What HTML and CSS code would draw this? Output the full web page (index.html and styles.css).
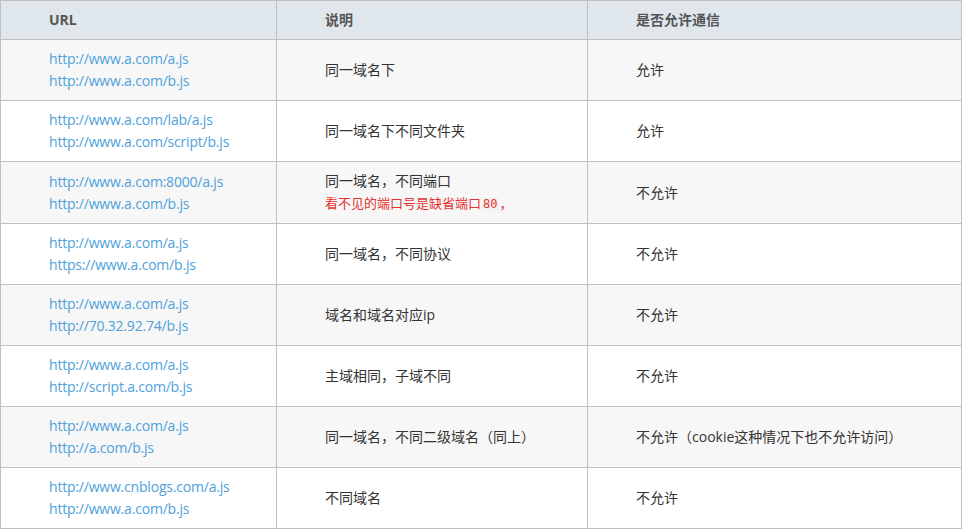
FILE: index.html
```html
<!DOCTYPE html>
<html lang="zh-CN">
<head>
<meta charset="utf-8">
<title>跨域通信</title>
<link rel="stylesheet" href="styles.css">
</head>
<body>
<table class="grid">
  <colgroup>
    <col class="c1"><col class="c2"><col class="c3">
  </colgroup>
  <thead>
    <tr><th>URL</th><th>说明</th><th>是否允许通信</th></tr>
  </thead>
  <tbody>
    <tr class="odd">
      <td><a class="lk">http://www.a.com/a.js</a><br><a class="lk">http://www.a.com/b.js</a></td>
      <td>同一域名下</td>
      <td>允许</td>
    </tr>
    <tr>
      <td><a class="lk">http://www.a.com/lab/a.js</a><br><a class="lk">http://www.a.com/script/b.js</a></td>
      <td>同一域名下不同文件夹</td>
      <td>允许</td>
    </tr>
    <tr class="odd">
      <td><a class="lk">http://www.a.com:8000/a.js</a><br><a class="lk">http://www.a.com/b.js</a></td>
      <td><div class="line">同一域名，不同端口</div><div class="note">看不见的端口号是缺省端口<code class="code">80</code>，</div></td>
      <td>不允许</td>
    </tr>
    <tr>
      <td><a class="lk">http://www.a.com/a.js</a><br><a class="lk">https://www.a.com/b.js</a></td>
      <td>同一域名，不同协议</td>
      <td>不允许</td>
    </tr>
    <tr class="odd">
      <td><a class="lk">http://www.a.com/a.js</a><br><a class="lk">http://70.32.92.74/b.js</a></td>
      <td>域名和域名对应ip</td>
      <td>不允许</td>
    </tr>
    <tr>
      <td><a class="lk">http://www.a.com/a.js</a><br><a class="lk">http://script.a.com/b.js</a></td>
      <td>主域相同，子域不同</td>
      <td>不允许</td>
    </tr>
    <tr class="odd">
      <td><a class="lk">http://www.a.com/a.js</a><br><a class="lk">http://a.com/b.js</a></td>
      <td>同一域名，不同二级域名（同上）</td>
      <td>不允许（cookie这种情况下也不允许访问）</td>
    </tr>
    <tr>
      <td><a class="lk">http://www.cnblogs.com/a.js</a><br><a class="lk">http://www.a.com/b.js</a></td>
      <td>不同域名</td>
      <td>不允许</td>
    </tr>
  </tbody>
</table>
</body>
</html>
```
FILE: styles.css
```css
html, body {
  margin: 0;
  padding: 0;
  background: #fff;
}
body {
  font-family: "Open Sans", "Noto Sans CJK SC", sans-serif;
  font-size: 14px;
  color: #333;
}
.grid {
  border-collapse: collapse;
  table-layout: fixed;
  width: 961px;
  border: 1px solid #c0c0c0;
}
.c1 { width: 276px; }
.c2 { width: 311px; }
.c3 { width: 374px; }
.grid th,
.grid td {
  border: 1px solid #c0c0c0;
  padding: 8px 10px 8px 48px;
  line-height: 22px;
  text-align: left;
  vertical-align: middle;
  white-space: nowrap;
}
.grid th {
  background: #dfe6ec;
  color: #555;
  font-weight: bold;
  font-size: 14px;
  height: 22px;
}
.grid tr.odd td {
  background: #f7f7f7;
}
.lk {
  color: #4ea1dc;
  text-decoration: none;
  letter-spacing: -0.2px;
}
.line {
  height: 22px;
}
.note {
  color: #e5312f;
  font-size: 13px;
  line-height: 23px;
  height: 23px;
  overflow: hidden;
}
.code {
  font-family: "DejaVu Sans Mono", "Liberation Mono", monospace;
  font-size: 12px;
  line-height: 16px;
  background: #f2f2f2;
  color: #e5312f;
  padding: 0 2px;
}
```
